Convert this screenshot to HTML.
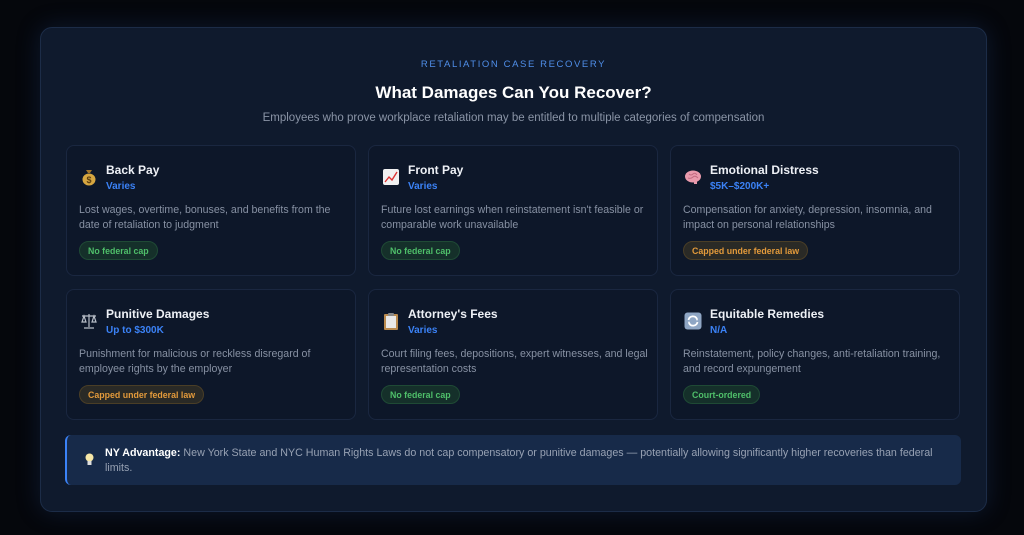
<!DOCTYPE html>
<html><head><meta charset="utf-8"><style>
*{margin:0;padding:0;box-sizing:border-box}
body{width:1024px;height:535px;background:#05070c;font-family:"Liberation Sans",sans-serif;position:relative;overflow:hidden}
.panel{position:absolute;left:40px;top:27px;width:947px;height:485px;background:#0f1a2d;border:1px solid #1c2c47;border-radius:12px;box-shadow:0 0 24px rgba(40,80,150,.25)}
.kick{position:absolute;top:59px;width:100%;text-align:center;font-size:9.5px;letter-spacing:1.6px;color:#4f8ee8}
h1{position:absolute;top:82px;width:100%;text-align:center;font-size:17px;color:#fff;font-weight:bold}
.sub{position:absolute;top:111px;width:100%;text-align:center;font-size:11.5px;color:#8a94a6}
.card{position:absolute;width:290px;height:131px;background:#0d1729;border:1px solid #1a2740;border-radius:8px}
.ic{position:absolute;left:13px;top:22px;width:18px;height:18px}
.t{position:absolute;left:39px;top:17px;font-size:12px;font-weight:bold;color:#eef1f6}
.v{position:absolute;left:39px;top:35px;font-size:10px;font-weight:bold;color:#3b82f6}
.d{position:absolute;left:12px;top:57px;width:285px;white-space:nowrap;font-size:10.6px;line-height:15px;color:#8791a3}
.b{position:absolute;left:12px;top:95px;height:19px;padding:0 8px;border-radius:10px;font-size:8.8px;font-weight:bold;line-height:18px}
.g{background:#15302a;border:1px solid #1f4a35;color:#4fbf6a}
.o{background:#2a2a26;border:1px solid #4a3e26;color:#e39a3b}
.call{position:absolute;left:65px;top:435px;width:896px;height:50px;background:#172a49;border-left:2px solid #3b82f6;border-radius:6px}
.call p{position:absolute;left:38px;top:11px;width:850px;font-size:10.7px;line-height:15px;color:#97a1b3}
.call b{color:#fff}
</style></head><body>
<div class="panel">
<div class="kick" style="top:31px">RETALIATION CASE RECOVERY</div>
<h1 style="top:55px">What Damages Can You Recover?</h1>
<div class="sub" style="top:84px">Employees who prove workplace retaliation may be entitled to multiple categories of compensation</div>
</div>

<div class="card" style="left:66px;top:145px">
<svg class="ic" viewBox="0 0 18 18"><path d="M6 2h6l-2 3h-2z" fill="#a3762a"/><ellipse cx="9" cy="11.5" rx="6.5" ry="6" fill="#d6a640"/><text x="9" y="15" font-size="9" text-anchor="middle" fill="#5a3d10" font-family="Liberation Sans" font-weight="bold">$</text></svg>
<div class="t">Back Pay</div><div class="v">Varies</div>
<div class="d">Lost wages, overtime, bonuses, and benefits from the<br>date of retaliation to judgment</div>
<div class="b g">No federal cap</div></div>

<div class="card" style="left:368px;top:145px">
<svg class="ic" viewBox="0 0 18 18"><rect x="1" y="1" width="16" height="16" rx="2" fill="#f1f1f1"/><path d="M3 14l4-5 3 3 5-8" stroke="#d33" stroke-width="1.4" fill="none"/></svg>
<div class="t">Front Pay</div><div class="v">Varies</div>
<div class="d">Future lost earnings when reinstatement isn't feasible or<br>comparable work unavailable</div>
<div class="b g">No federal cap</div></div>

<div class="card" style="left:670px;top:145px">
<svg class="ic" viewBox="0 0 18 18"><ellipse cx="9" cy="8.5" rx="8" ry="6" fill="#e99aac"/><path d="M5 6q2 2 4 0t4 1M4 10q3 1 5-1t5 1" stroke="#c26a80" fill="none"/><rect x="10" y="13" width="3" height="3" fill="#e99aac"/></svg>
<div class="t">Emotional Distress</div><div class="v">$5K–$200K+</div>
<div class="d">Compensation for anxiety, depression, insomnia, and<br>impact on personal relationships</div>
<div class="b o">Capped under federal law</div></div>

<div class="card" style="left:66px;top:289px">
<svg class="ic" viewBox="0 0 18 18" stroke="#b8bec8" fill="none" stroke-width="1.2"><path d="M9 2v13M4 16h10M2 4h14M4 4l-2 6h4zM14 4l-2 6h4z"/></svg>
<div class="t">Punitive Damages</div><div class="v">Up to $300K</div>
<div class="d">Punishment for malicious or reckless disregard of<br>employee rights by the employer</div>
<div class="b o">Capped under federal law</div></div>

<div class="card" style="left:368px;top:289px">
<svg class="ic" viewBox="0 0 18 18"><rect x="2" y="2" width="14" height="16" rx="1" fill="#b98a4e"/><rect x="4" y="4" width="10" height="12" fill="#e8e8e8"/><rect x="6" y="1" width="6" height="3" rx="1" fill="#888"/></svg>
<div class="t">Attorney's Fees</div><div class="v">Varies</div>
<div class="d">Court filing fees, depositions, expert witnesses, and legal<br>representation costs</div>
<div class="b g">No federal cap</div></div>

<div class="card" style="left:670px;top:289px">
<svg class="ic" viewBox="0 0 18 18"><rect x="0.5" y="0.5" width="17" height="17" rx="3" fill="#8fa6c4"/><path d="M4.5 8a4.5 4.5 0 0 1 8.5-1M13.5 10a4.5 4.5 0 0 1-8.5 1" stroke="#fff" stroke-width="1.8" fill="none"/><path d="M11 5l3 2-1 2zM7 13l-3-2 1-2z" fill="#fff"/></svg>
<div class="t">Equitable Remedies</div><div class="v">N/A</div>
<div class="d">Reinstatement, policy changes, anti-retaliation training,<br>and record expungement</div>
<div class="b g">Court-ordered</div></div>

<div class="call">
<svg style="position:absolute;left:18px;top:18px" width="9" height="13" viewBox="0 0 9 13"><circle cx="4.5" cy="4.5" r="4" fill="#f6e7a8"/><rect x="2.5" y="8" width="4" height="4" fill="#ddd"/></svg>
<p><b>NY Advantage:</b> New York State and NYC Human Rights Laws do not cap compensatory or punitive damages — potentially allowing significantly higher recoveries than federal<br>limits.</p>
</div>
</body></html>
